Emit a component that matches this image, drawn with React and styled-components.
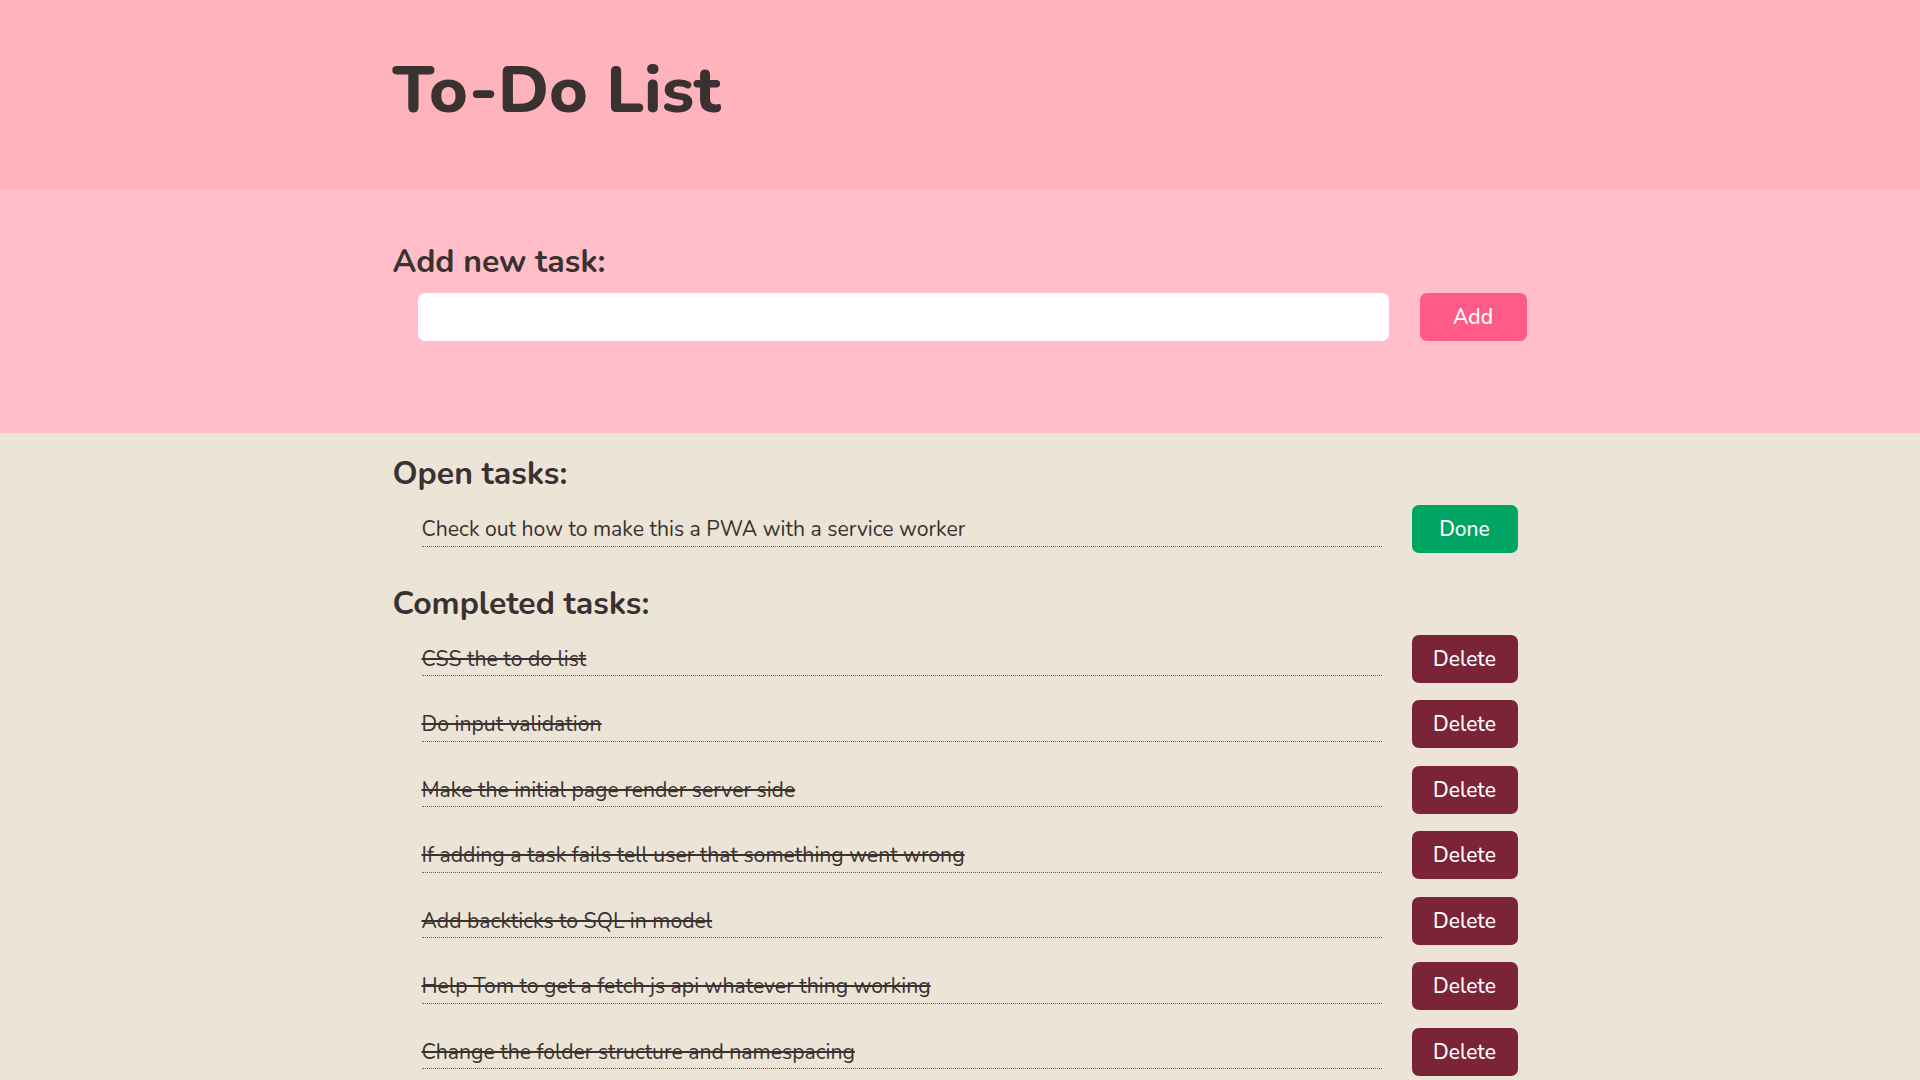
import React, { useState } from "react";
import styled, { createGlobalStyle } from "styled-components";

const GlobalStyle = createGlobalStyle`
  html, body {
    margin: 0;
    padding: 0;
    background-color: #ece4d6;
  }
  body {
    font-family: "Nunito", Lato, "Open Sans", sans-serif;
    color: #3a3131;
  }
  * {
    box-sizing: border-box;
  }
`;

const initialOpen = ["Check out how to make this a PWA with a service worker"];

const initialDone = [
  "CSS the to do list",
  "Do input validation",
  "Make the initial page render server side",
  "If adding a task fails tell user that something went wrong",
  "Add backticks to SQL in model",
  "Help Tom to get a fetch js api whatever thing working",
  "Change the folder structure and namespacing",
];

const App = () => {
  const [openTasks, setOpenTasks] = useState(initialOpen);
  const [doneTasks, setDoneTasks] = useState(initialDone);
  const [newTask, setNewTask] = useState("");

  const addHandler = (event) => {
    event.preventDefault();
    if (newTask.trim() === "") return;
    setOpenTasks([...openTasks, newTask.trim()]);
    setNewTask("");
  };

  const doneHandler = (index) => {
    setDoneTasks([openTasks[index], ...doneTasks]);
    setOpenTasks(openTasks.filter((_, i) => i !== index));
  };

  const deleteHandler = (index) => {
    setDoneTasks(doneTasks.filter((_, i) => i !== index));
  };

  return (
    <React.Fragment>
      <GlobalStyle />
      <Header>
        <Container>
          <Title>To-Do List</Title>
        </Container>
      </Header>
      <AddSection>
        <Container>
          <Heading>Add new task:</Heading>
          <AddForm onSubmit={addHandler}>
            <Input
              type="text"
              value={newTask}
              onChange={(e) => setNewTask(e.target.value)}
            />
            <Button type="submit" $color="#ff5b88" $wide>
              Add
            </Button>
          </AddForm>
        </Container>
      </AddSection>
      <Main>
        <Container>
          <Heading>Open tasks:</Heading>
          <TaskList>
            {openTasks.map((task, i) => (
              <TaskRow key={task}>
                <TaskText>{task}</TaskText>
                <Button $color="#00a563" onClick={() => doneHandler(i)}>
                  Done
                </Button>
              </TaskRow>
            ))}
          </TaskList>
          <Heading>Completed tasks:</Heading>
          <TaskList>
            {doneTasks.map((task, i) => (
              <TaskRow key={task}>
                <TaskText $done>{task}</TaskText>
                <Button $color="#7b2438" onClick={() => deleteHandler(i)}>
                  Delete
                </Button>
              </TaskRow>
            ))}
          </TaskList>
        </Container>
      </Main>
    </React.Fragment>
  );
};

const Container = styled.div`
  width: 1135px;
  margin: 0 auto;
`;

const Header = styled.header`
  background-color: #ffb3bd;
  height: 189px;
  padding-top: 57px;
`;

const Title = styled.h1`
  margin: 0;
  font-size: 66px;
  line-height: 1;
  font-weight: 800;
`;

const AddSection = styled.section`
  background-color: #ffbeca;
  height: 244px;
  padding-top: 57px;
`;

const Heading = styled.h2`
  margin: 0 0 15px 0;
  font-size: 32px;
  line-height: 1;
  font-weight: 700;
`;

const AddForm = styled.form`
  display: flex;
  align-items: flex-start;
  padding-left: 25px;
`;

const Input = styled.input`
  width: 971px;
  height: 48px;
  border: none;
  border-radius: 7px;
  background-color: #fff;
  font-family: inherit;
  font-size: 20px;
  padding: 0 14px;
  outline: none;
`;

const Button = styled.button`
  width: ${(props) => (props.$wide ? "107px" : "106px")};
  height: 48px;
  margin-left: ${(props) => (props.$wide ? "31px" : "30px")};
  border: none;
  border-radius: 7px;
  background-color: ${(props) => props.$color};
  color: #fff;
  font-family: inherit;
  font-size: 21px;
  font-weight: 500;
  cursor: pointer;
  flex-shrink: 0;
`;

const Main = styled.main`
  min-height: calc(100vh - 433px);
  padding-top: 25px;
`;

const TaskList = styled.ul`
  list-style: none;
  margin: 0 0 34.5px 0;
  padding: 0 0 0 29px;
`;

const TaskRow = styled.li`
  display: flex;
  align-items: flex-end;
  margin-bottom: 17.5px;
`;

const TaskText = styled.span`
  flex: 1;
  max-width: 960px;
  font-size: 21.2px;
  line-height: 29px;
  padding-bottom: 1.5px;
  margin-bottom: 6.5px;
  border-bottom: 1px dotted #6e6464;
  text-decoration: ${(props) => (props.$done ? "line-through" : "none")};
`;

export default App;
